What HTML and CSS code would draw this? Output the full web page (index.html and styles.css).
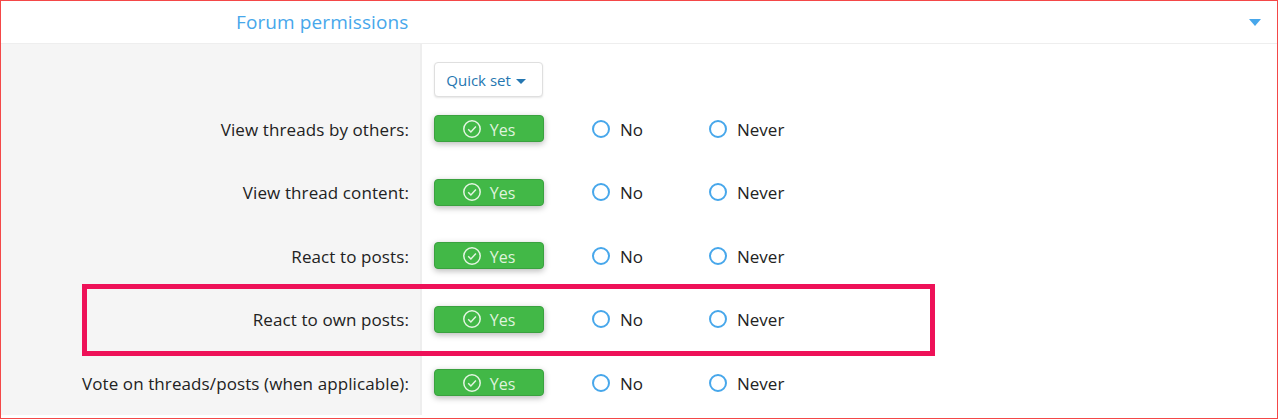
FILE: index.html
```html
<!DOCTYPE html>
<html lang="en">
<head>
  <meta charset="UTF-8">
  <meta name="viewport" content="width=device-width, initial-scale=1.0">
  <title>Forum permissions</title>
  <link rel="stylesheet" href="styles.css">
</head>
<body>
  <div class="frame">
    <div class="header">
      <h2 class="header-title">Forum permissions</h2>
      <span class="header-caret"></span>
    </div>

    <div class="row row-top">
      <div class="row-label"></div>
      <div class="row-field">
        <button class="quick-set">Quick set <span class="quick-caret"></span></button>
      </div>
    </div>

    <div class="row">
      <div class="row-label">View threads by others:</div>
      <div class="row-field">
        <span class="btn-yes">
          <svg class="check" viewBox="0 0 18 18"><circle cx="9" cy="9" r="8.2"/><path d="M5.2 9.3l2.7 2.7 5-5.4"/></svg>
          <span class="yes-text">Yes</span>
        </span>
        <span class="option option-no"><span class="radio"></span>No</span>
        <span class="option"><span class="radio"></span>Never</span>
      </div>
    </div>

    <div class="row">
      <div class="row-label">View thread content:</div>
      <div class="row-field">
        <span class="btn-yes">
          <svg class="check" viewBox="0 0 18 18"><circle cx="9" cy="9" r="8.2"/><path d="M5.2 9.3l2.7 2.7 5-5.4"/></svg>
          <span class="yes-text">Yes</span>
        </span>
        <span class="option option-no"><span class="radio"></span>No</span>
        <span class="option"><span class="radio"></span>Never</span>
      </div>
    </div>

    <div class="row">
      <div class="row-label">React to posts:</div>
      <div class="row-field">
        <span class="btn-yes">
          <svg class="check" viewBox="0 0 18 18"><circle cx="9" cy="9" r="8.2"/><path d="M5.2 9.3l2.7 2.7 5-5.4"/></svg>
          <span class="yes-text">Yes</span>
        </span>
        <span class="option option-no"><span class="radio"></span>No</span>
        <span class="option"><span class="radio"></span>Never</span>
      </div>
    </div>

    <div class="row">
      <div class="row-label">React to own posts:</div>
      <div class="row-field">
        <span class="btn-yes">
          <svg class="check" viewBox="0 0 18 18"><circle cx="9" cy="9" r="8.2"/><path d="M5.2 9.3l2.7 2.7 5-5.4"/></svg>
          <span class="yes-text">Yes</span>
        </span>
        <span class="option option-no"><span class="radio"></span>No</span>
        <span class="option"><span class="radio"></span>Never</span>
      </div>
    </div>

    <div class="row">
      <div class="row-label">Vote on threads/posts (when applicable):</div>
      <div class="row-field">
        <span class="btn-yes">
          <svg class="check" viewBox="0 0 18 18"><circle cx="9" cy="9" r="8.2"/><path d="M5.2 9.3l2.7 2.7 5-5.4"/></svg>
          <span class="yes-text">Yes</span>
        </span>
        <span class="option option-no"><span class="radio"></span>No</span>
        <span class="option"><span class="radio"></span>Never</span>
      </div>
    </div>

    <div class="highlight"></div>
  </div>
</body>
</html>
```

FILE: styles.css
```css
html, body {
  margin: 0;
  height: 100%;
}

body {
  font-family: "Open Sans", "Noto Sans", sans-serif;
  font-size: 17px;
  color: #222;
  background: white;
  overflow: hidden;
}

.frame {
  position: relative;
  box-sizing: border-box;
  height: 419px;
  border: 1px solid #f44848;
  overflow: hidden;
}

.header {
  display: flex;
  align-items: center;
  justify-content: space-between;
  box-sizing: border-box;
  height: 43px;
  padding: 0 16px 0 235px;
  border-bottom: 1px solid #eee;
}

.header-title {
  margin: 0;
  font-size: 19px;
  font-weight: normal;
  letter-spacing: 0.1px;
  color: #47a7eb;
}

.header-caret {
  width: 0;
  height: 0;
  border-left: 6.5px solid transparent;
  border-right: 6.5px solid transparent;
  border-top: 7px solid #47a7eb;
}

.row {
  display: flex;
  height: 63.5px;
}

.row-top {
  height: 53px;
}

.row-label {
  box-sizing: border-box;
  flex: 0 0 421px;
  display: flex;
  align-items: center;
  justify-content: flex-end;
  padding-right: 11px;
  padding-top: 1px;
  letter-spacing: 0.1px;
  background: #f5f5f5;
  border-right: 2px solid #eee;
}

.row-field {
  display: flex;
  align-items: center;
  padding-left: 12px;
}

.row-top .row-field {
  align-items: flex-end;
}

.quick-set {
  box-sizing: border-box;
  width: 109px;
  height: 35px;
  padding: 0 5px 0 0;
  font: inherit;
  font-size: 15px;
  color: #2577b1;
  background: white;
  border: 1px solid #dfdfdf;
  border-radius: 4px;
  box-shadow: 0 1px 2px rgba(0,0,0,0.1);
}

.quick-caret {
  display: inline-block;
  width: 0;
  height: 0;
  margin-left: 1px;
  vertical-align: 2px;
  border-left: 5px solid transparent;
  border-right: 5px solid transparent;
  border-top: 5px solid #2577b1;
}

.btn-yes {
  box-sizing: border-box;
  display: flex;
  align-items: center;
  justify-content: center;
  gap: 9px;
  width: 110px;
  height: 27px;
  margin-right: 48px;
  font-size: 16px;
  color: #dff3dd;
  background: #42b847;
  border: 1px solid #3aa23f;
  border-radius: 4px;
  box-shadow: 0 2px 6px rgba(0,0,0,0.28);
}

.yes-text {
  padding-top: 2px;
}

.check {
  width: 18px;
  height: 18px;
  fill: none;
  stroke: #e4f5e2;
  stroke-width: 1.5;
}

.option {
  display: flex;
  align-items: center;
  gap: 10px;
  padding-top: 1px;
  color: #222;
}

.option-no {
  width: 117px;
}

.radio {
  box-sizing: border-box;
  width: 18px;
  height: 18px;
  margin-top: -1px;
  background: white;
  border: 2px solid #47a7eb;
  border-radius: 50%;
}

/* annotation drawn over the form */
.highlight {
  position: absolute;
  left: 81px;
  top: 283px;
  box-sizing: border-box;
  width: 853px;
  height: 72px;
  border: 5px solid #ee1158;
}
```
